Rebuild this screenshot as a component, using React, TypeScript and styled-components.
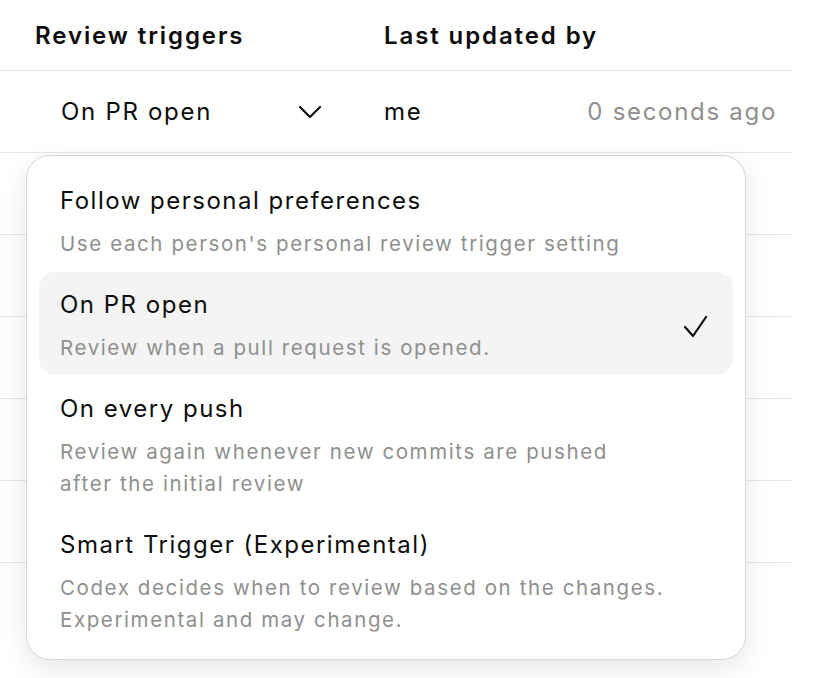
import React from 'react';
import styled, { createGlobalStyle } from 'styled-components';

const GlobalStyle = createGlobalStyle`
  html, body {
    margin: 0;
    padding: 0;
    background: #ffffff;
  }

  body {
    font-family: Inter, "Noto Sans", "Liberation Sans", sans-serif;
    color: #0d0d0d;
    -webkit-font-smoothing: antialiased;
  }
`;

const Page = styled.div`
  position: relative;
  width: 826px;
  height: 678px;
  overflow: hidden;
`;

const Table = styled.div`
  width: 793px;
`;

const Row = styled.div<{ $height: number }>`
  display: grid;
  grid-template-columns: 384px 1fr auto;
  align-items: center;
  height: ${(p) => p.$height}px;
  border-bottom: 1px solid #e6e6e6;
  padding-right: 16px;
`;

const HeaderCell = styled.div`
  font-size: 24px;
  font-weight: 600;
  letter-spacing: 1.9px;
  padding-left: 35px;

  &:nth-child(2) {
    padding-left: 0;
  }
`;

const TriggerSelect = styled.button`
  display: flex;
  align-items: center;
  justify-content: space-between;
  width: 310px;
  margin-left: 26px;
  padding: 0 14px 0 35px;
  border: 0;
  background: transparent;
  font: inherit;
  font-size: 24px;
  letter-spacing: 1.7px;
  color: #0d0d0d;
  cursor: pointer;
`;

const Cell = styled.div<{ $muted?: boolean }>`
  font-size: 24px;
  letter-spacing: 1.7px;
  color: ${(p) => (p.$muted ? '#8f8f8f' : '#0d0d0d')};
`;

const Menu = styled.div`
  position: absolute;
  left: 26px;
  top: 155px;
  width: 720px;
  box-sizing: border-box;
  padding: 12px;
  background: #ffffff;
  border: 1px solid #d6d6d6;
  border-radius: 24px;
  box-shadow: 0 8px 28px rgba(0, 0, 0, 0.1);
  display: flex;
  flex-direction: column;
  gap: 1px;
`;

const Option = styled.div<{ $selected?: boolean }>`
  display: flex;
  align-items: center;
  justify-content: space-between;
  padding: 17px 24px 11px 21px;
  border-radius: 16px;
  background: ${(p) => (p.$selected ? '#f4f4f4' : 'transparent')};
`;

const OptionText = styled.div`
  display: flex;
  flex-direction: column;
  gap: 11px;
`;

const OptionTitle = styled.div`
  font-size: 24px;
  line-height: 32px;
  letter-spacing: 1.5px;
  color: #0d0d0d;
`;

const OptionDesc = styled.div`
  font-size: 20.5px;
  line-height: 32px;
  letter-spacing: 1.6px;
  color: #8f8f8f;
  max-width: 605px;
`;

const Chevron = () => (
  <svg width="24" height="14" viewBox="0 0 24 14" fill="none">
    <path d="M2 2 L12 12 L22 2" stroke="#0d0d0d" strokeWidth="2.2" strokeLinecap="round" strokeLinejoin="round" />
  </svg>
);

const Check = () => (
  <svg width="26" height="24" viewBox="0 0 26 24" fill="none">
    <path d="M2 12 L10 21 L23 2" stroke="#0d0d0d" strokeWidth="2.2" strokeLinecap="round" strokeLinejoin="round" />
  </svg>
);

const options = [
  {
    title: 'Follow personal preferences',
    desc: "Use each person's personal review trigger setting",
  },
  {
    title: 'On PR open',
    desc: 'Review when a pull request is opened.',
    selected: true,
  },
  {
    title: 'On every push',
    desc: 'Review again whenever new commits are pushed after the initial review',
  },
  {
    title: 'Smart Trigger (Experimental)',
    desc: 'Codex decides when to review based on the changes. Experimental and may change.',
  },
];

export default function App() {
  return (
    <Page>
      <GlobalStyle />
      <Table>
        <Row $height={70}>
          <HeaderCell>Review triggers</HeaderCell>
          <HeaderCell>Last updated by</HeaderCell>
          <div />
        </Row>
        <Row $height={81}>
          <TriggerSelect>
            <span>On PR open</span>
            <Chevron />
          </TriggerSelect>
          <Cell>me</Cell>
          <Cell $muted>0 seconds ago</Cell>
        </Row>
        {[0, 1, 2, 3, 4].map((i) => (
          <Row key={i} $height={81} />
        ))}
      </Table>

      <Menu>
        {options.map((o) => (
          <Option key={o.title} $selected={o.selected}>
            <OptionText>
              <OptionTitle>{o.title}</OptionTitle>
              <OptionDesc>{o.desc}</OptionDesc>
            </OptionText>
            {o.selected && <Check />}
          </Option>
        ))}
      </Menu>
    </Page>
  );
}
